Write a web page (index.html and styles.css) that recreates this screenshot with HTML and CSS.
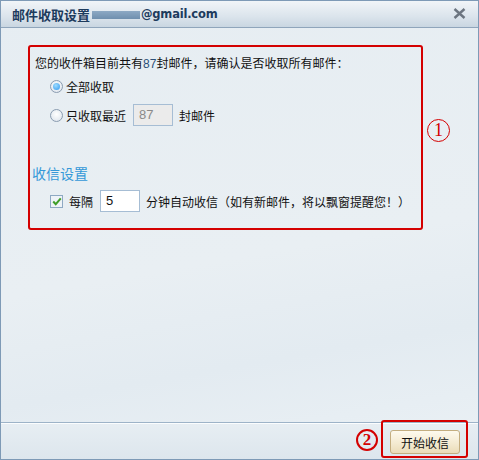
FILE: index.html
```html
<!DOCTYPE html>
<html>
<head>
  <title>邮件收取设置</title>
  <link rel="stylesheet" href="styles.css">
</head>
<body>

<div class="window">
  <div class="titlebar">
    <span class="title">邮件收取设置</span>
    <span class="blurred"></span>
    <span class="title-mail">@gmail.com</span>
    <svg class="close" width="13" height="11" viewBox="0 0 13 11">
      <path d="M1.5 1 L11.5 10 M11.5 1 L1.5 10" stroke="#6c7580" stroke-width="2.4" fill="none"/>
    </svg>
  </div>

  <div class="content">
    <div class="mark-box">
      <p class="intro">您的收件箱目前共有<span class="num">87</span>封邮件，请确认是否收取所有邮件：</p>

      <div class="option">
        <span class="radio checked"></span>
        <span>全部收取</span>
      </div>
      <div class="option">
        <span class="radio"></span>
        <span>只收取最近</span>
        <span class="field disabled">87</span>
        <span>封邮件</span>
      </div>

      <h2>收信设置</h2>

      <div class="option check-row">
        <span class="checkbox">
          <svg width="12" height="11" viewBox="0 0 12 11">
            <path d="M1.5 5.5 L4.5 8.8 L10.5 1.8" stroke="#3f9e28" stroke-width="2.4" fill="none"/>
          </svg>
        </span>
        <span>每隔</span>
        <span class="field">5</span>
        <span>分钟自动收信（如有新邮件，将以飘窗提醒您！）</span>
      </div>
    </div>
    <span class="circle-num one">1</span>
  </div>

  <div class="footer">
    <span class="circle-num two">2</span>
    <div class="mark-frame">
      <button>开始收信</button>
    </div>
  </div>
</div>

</body>
</html>
```

FILE: styles.css
```css
html, body {
  margin: 0;
  padding: 0;
  width: 479px;
  height: 460px;
  overflow: hidden;
  font-family: "Noto Sans CJK SC", "Liberation Sans", sans-serif;
  font-size: 12px;
  color: #111;
  background: #fff;
}

.window {
  width: 477px;
  height: 458px;
  border: 1px solid #7e9ab6;
  display: flex;
  flex-direction: column;
  background: linear-gradient(170deg, #e6edf2 0%, #e9eff3 55%, #e3ebf1 75%, #ebf1f5 100%);
}

.titlebar {
  height: 26px;
  display: flex;
  align-items: center;
  padding-left: 11px;
  background: linear-gradient(#f1f5f8, #dbe4ec 60%, #c9d6e1);
  border-bottom: 1px solid #8fa5bb;
}

.title {
  font-size: 13px;
  font-weight: bold;
  color: #1d3b5d;
}

.blurred {
  display: inline-block;
  width: 48px;
  height: 8px;
  margin: 1px 1px 0 2px;
  background: linear-gradient(#8da9c4, #6f8fae);
  filter: blur(0.6px);
}

.title-mail {
  font-family: "DejaVu Sans", sans-serif;
  font-size: 11.5px;
  font-weight: bold;
  color: #1d3b5d;
  letter-spacing: -0.2px;
}

.close {
  margin-left: auto;
  margin-right: 12px;
  margin-top: -1px;
}

.content {
  flex: 1;
  display: flex;
  align-items: flex-start;
  padding: 17px 0 0 27px;
}

.mark-box {
  width: 382px;
  height: 171px;
  border: 2px solid #d40000;
  border-radius: 3px;
  padding: 8px 4px 2px 5px;
}

.intro {
  margin: 0;
  line-height: 16px;
}

.num {
  font-family: "Liberation Sans", sans-serif;
  color: #2a4f78;
}

.option {
  display: flex;
  align-items: center;
  height: 22px;
  margin-left: 15px;
  margin-top: 3px;
}

.option:nth-of-type(2) {
  margin-top: 7px;
}

.radio {
  width: 11px;
  height: 11px;
  border: 1px solid #8a9cb0;
  border-radius: 50%;
  margin-right: 3px;
  background: radial-gradient(circle at 50% 40%, #ffffff, #d9e1ea);
  position: relative;
}

.radio.checked::after {
  content: "";
  position: absolute;
  left: 2px;
  top: 2px;
  width: 7px;
  height: 7px;
  border-radius: 50%;
  background: radial-gradient(circle at 40% 35%, #9fdcff, #2f98ee);
}

.field {
  display: inline-block;
  box-sizing: border-box;
  width: 40px;
  height: 22px;
  line-height: 20px;
  border: 1px solid #a6bdd4;
  background: #fff;
  padding-left: 5px;
  font-family: "Liberation Sans", sans-serif;
  font-size: 13px;
  margin: 0 6px 0 7px;
}

.field.disabled {
  background: #ebebeb;
  color: #8a8a8a;
}

h2 {
  margin: 38px 0 0 -3px;
  font-size: 14px;
  font-weight: normal;
  color: #3498d8;
  line-height: 18px;
}

.check-row {
  margin-top: 8px;
}

.checkbox {
  width: 11px;
  height: 11px;
  border: 1px solid #8ea9c3;
  background: #eef3f7;
  margin-right: 6px;
  display: flex;
  align-items: center;
  justify-content: center;
}

.checkbox svg {
  margin-left: 1px;
}

.circle-num {
  display: flex;
  align-items: center;
  justify-content: center;
  border: 1px solid #d40000;
  border-radius: 50%;
  color: #d40000;
  font-family: "Liberation Serif", serif;
}

.circle-num.one {
  width: 21px;
  height: 21px;
  font-size: 18px;
  margin: 74px 0 0 4px;
}

.footer {
  height: 36px;
  border-top: 1px solid #9db3c8;
  box-shadow: inset 0 1px 0 #fbfdfe;
  background: linear-gradient(#e7eef3, #dde6ed);
  display: flex;
  align-items: flex-start;
  justify-content: flex-end;
  padding-right: 10px;
}

.circle-num.two {
  width: 18px;
  height: 18px;
  border-width: 2px;
  font-size: 17px;
  font-weight: bold;
  margin: 6px 3px 0 0;
}

.mark-frame {
  margin-top: -3px;
  width: 76px;
  height: 26px;
  border: 2px solid #d40000;
  border-radius: 3px;
  padding: 8px 0 0 7px;
}

button {
  width: 70px;
  height: 24px;
  border: 1px solid #c4ae80;
  border-radius: 3px;
  background: linear-gradient(#fefaee, #f3e9cf 60%, #eadcb8);
  font-family: "Noto Sans CJK SC", sans-serif;
  font-size: 12px;
  color: #111;
  padding: 0;
}
```
